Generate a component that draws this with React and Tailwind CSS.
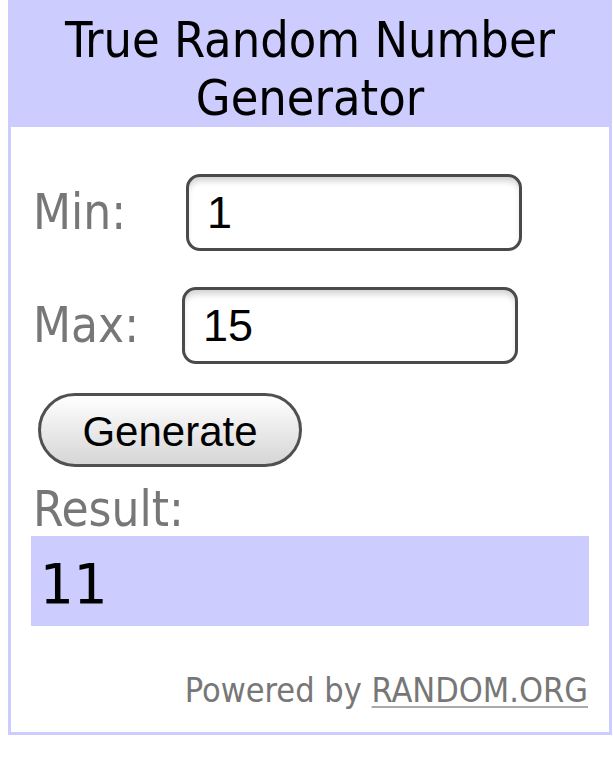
import React from 'react';

const label = "text-[49px] leading-none text-[#777] font-['DejaVu_Sans_Condensed','DejaVu_Sans',sans-serif]";
const field =
  "h-[77px] w-[336px] rounded-[14px] border-[3px] border-[#4a4a4a] bg-white pl-[18px] text-[45px] text-black outline-none shadow-[inset_0_6px_6px_-2px_rgba(0,0,0,0.18)] font-['Liberation_Sans',Arial,sans-serif]";

// Number field with its label on the left
const Row = ({ name, value, labelWidth, className }) => (
  <div className={`flex items-center ${className}`}>
    <span className={`${label} shrink-0`} style={{ width: labelWidth }}>
      {name}
    </span>
    <input className={field} value={value} readOnly />
  </div>
);

export default function App() {
  return (
    <div className="min-h-[770px] bg-white">
      <div className="ml-[8px] w-[604px] border-x-[3px] border-b-[3px] border-[#ccccff]">
        {/* Title bar */}
        <div className="h-[127px] -mx-[3px] bg-[#ccccff] pt-[11px] text-center text-[50px] leading-[58px] text-black font-['DejaVu_Sans_Condensed','DejaVu_Sans',sans-serif]">
          True Random Number
          <br />
          Generator
        </div>

        <div className="flex flex-col">
          <Row name="Min:" value="1" labelWidth={153} className="ml-[22px] mt-[47px]" />
          <Row name="Max:" value="15" labelWidth={149} className="ml-[22px] mt-[36px]" />

          <button className="ml-[27px] mt-[29px] h-[74px] w-[264px] rounded-full border-[3px] border-[#505050] bg-linear-to-b from-white to-[#d6d6d6] pt-[2px] text-[42px] text-black font-['Liberation_Sans',Arial,sans-serif]">
            Generate
          </button>

          <div className={`${label} ml-[22px] mt-[18px]`}>Result:</div>

          <div className="mx-[20px] mt-[2px] h-[90px] bg-[#ccccff] pl-[8px] pt-[20px] text-[56px] leading-none text-black font-['DejaVu_Sans_Mono',monospace]">
            11
          </div>

          <div className="mt-[47px] pb-[25px] pr-[21px] text-right text-[34px] leading-none text-[#777] font-['DejaVu_Sans_Condensed','DejaVu_Sans',sans-serif]">
            Powered by{' '}
            <a className="underline decoration-[#aaa] decoration-2 underline-offset-[4px]">RANDOM.ORG</a>
          </div>
        </div>
      </div>
    </div>
  );
}
